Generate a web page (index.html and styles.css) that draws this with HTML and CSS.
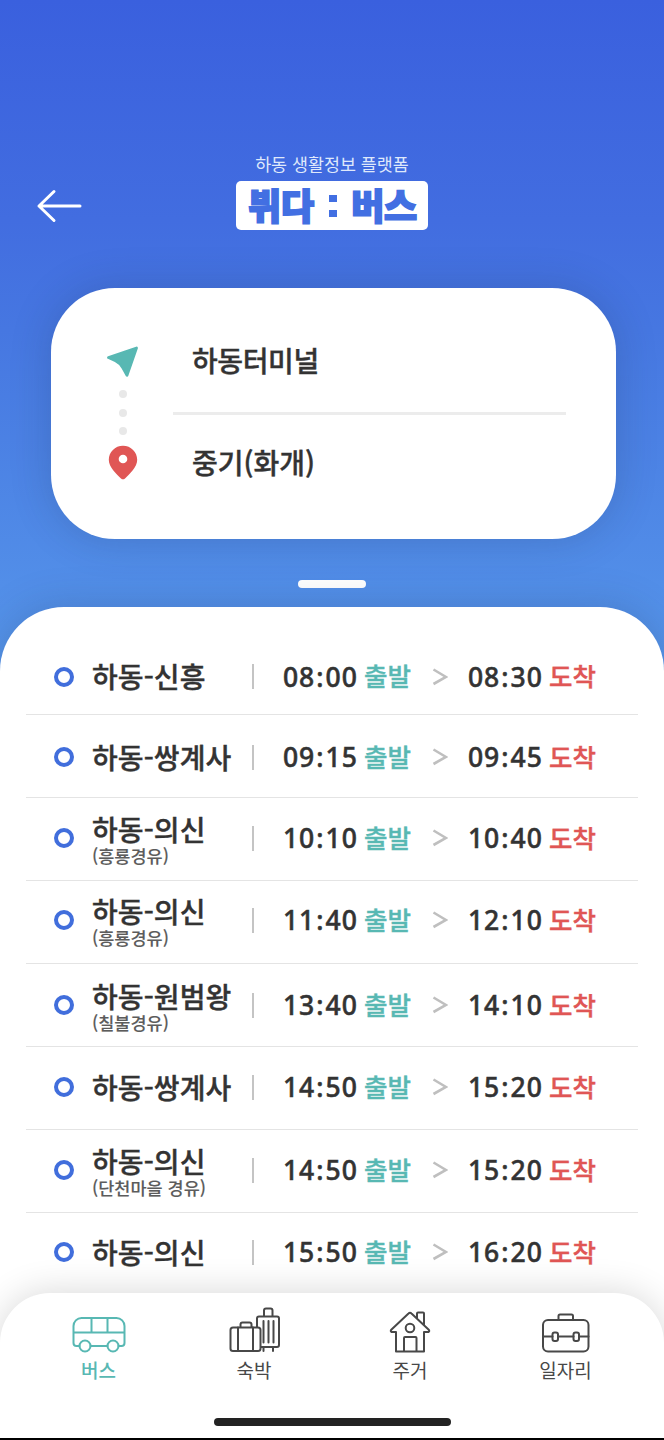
FILE: index.html
```html
<!DOCTYPE html>
<html lang="ko">
<head>
<meta charset="utf-8">
<title>뷔다 : 버스</title>
<link rel="stylesheet" href="styles.css">
</head>
<body>
<div class="screen">
  <header class="header">
    <svg class="back" width="46" height="36" viewBox="0 0 46 36"><path d="M18 3.500L3 18l15 14.500M3 18h41" fill="none" stroke="#fff" stroke-width="3" stroke-linecap="round" stroke-linejoin="round"/></svg>
    <div class="brand">
      <p class="tagline">하동 생활정보 플랫폼</p>
      <h1 class="logo"><span>뷔다</span><i class="colon"><b></b><b></b></i><span>버스</span></h1>
    </div>
  </header>

  <section class="route">
    <div class="markers">
      <svg width="32" height="32" viewBox="0 0 32 32"><path d="M1.500 11.500L29.500 2 20 29.200 16 22Q13 17 8.500 14.800Z" fill="#58b8b3" stroke="#58b8b3" stroke-width="2.800" stroke-linejoin="round"/></svg>
      <div class="dots"><i></i><i></i><i></i></div>
      <svg width="30" height="35" viewBox="0 0 30 35"><path d="M15 .7C7 .7 .8 7 .8 14.800c0 7.500 7.700 14.400 12.200 18.600q2 1.800 4 0C21.500 29.200 29.200 22.300 29.200 14.800 29.200 7 23 .7 15 .7z" fill="#e05655"/><circle cx="15" cy="14" r="4.300" fill="#fff"/></svg>
    </div>
    <div class="stops">
      <div class="stop">하동터미널</div>
      <div class="stop last">중기(화개)</div>
    </div>
  </section>

  <div class="handle"></div>

  <main class="sheet">
    <div class="row first"><i class="ring"></i><div class="name">하동-신흥</div><i class="bar"></i><time>08<b>:</b>00</time><em class="dep">출발</em><svg class="gt" viewBox="0 0 16 18"><path d="M1.500 1.500L14 9 1.500 16"/></svg><time>08<b>:</b>30</time><em class="arr">도착</em></div>
    <div class="row lowered"><i class="ring"></i><div class="name">하동-쌍계사</div><i class="bar"></i><time>09<b>:</b>15</time><em class="dep">출발</em><svg class="gt" viewBox="0 0 16 18"><path d="M1.500 1.500L14 9 1.500 16"/></svg><time>09<b>:</b>45</time><em class="arr">도착</em></div>
    <div class="row"><i class="ring"></i><div class="name via">하동-의신<small>(흥룡경유)</small></div><i class="bar"></i><time>10<b>:</b>10</time><em class="dep">출발</em><svg class="gt" viewBox="0 0 16 18"><path d="M1.500 1.500L14 9 1.500 16"/></svg><time>10<b>:</b>40</time><em class="arr">도착</em></div>
    <div class="row raised"><i class="ring"></i><div class="name via">하동-의신<small>(흥룡경유)</small></div><i class="bar"></i><time>11<b>:</b>40</time><em class="dep">출발</em><svg class="gt" viewBox="0 0 16 18"><path d="M1.500 1.500L14 9 1.500 16"/></svg><time>12<b>:</b>10</time><em class="arr">도착</em></div>
    <div class="row middle"><i class="ring"></i><div class="name via">하동-원범왕<small>(칠불경유)</small></div><i class="bar"></i><time>13<b>:</b>40</time><em class="dep">출발</em><svg class="gt" viewBox="0 0 16 18"><path d="M1.500 1.500L14 9 1.500 16"/></svg><time>14<b>:</b>10</time><em class="arr">도착</em></div>
    <div class="row"><i class="ring"></i><div class="name">하동-쌍계사</div><i class="bar"></i><time>14<b>:</b>50</time><em class="dep">출발</em><svg class="gt" viewBox="0 0 16 18"><path d="M1.500 1.500L14 9 1.500 16"/></svg><time>15<b>:</b>20</time><em class="arr">도착</em></div>
    <div class="row"><i class="ring"></i><div class="name via">하동-의신<small>(단천마을 경유)</small></div><i class="bar"></i><time>14<b>:</b>50</time><em class="dep">출발</em><svg class="gt" viewBox="0 0 16 18"><path d="M1.500 1.500L14 9 1.500 16"/></svg><time>15<b>:</b>20</time><em class="arr">도착</em></div>
    <div class="row final"><i class="ring"></i><div class="name">하동-의신</div><i class="bar"></i><time>15<b>:</b>50</time><em class="dep">출발</em><svg class="gt" viewBox="0 0 16 18"><path d="M1.500 1.500L14 9 1.500 16"/></svg><time>16<b>:</b>20</time><em class="arr">도착</em></div>
  </main>

  <nav class="tabs">
    <a class="tab active">
      <svg width="56" height="50" viewBox="0 0 56 50"><path d="M8.500 40H5.500a3 3 0 0 1-3-3V20a8 8 0 0 1 8-8h35a8 8 0 0 1 8 8v17a3 3 0 0 1-3 3h-3M19.500 40h17M2.500 26.500h51M20.500 12v14M36.500 12v14"/><circle cx="14" cy="40" r="5.500"/><circle cx="42" cy="40" r="5.500"/></svg>
      <span>버스</span>
    </a>
    <a class="tab">
      <svg width="56" height="50" viewBox="0 0 56 50"><rect x="4.500" y="21.500" width="30" height="23.500" rx="2.500"/><path d="M12 21.500V45M27 21.500V45M14.500 21v-2.500a2 2 0 0 1 2-2h7a2 2 0 0 1 2 2V21M31 21V12.500a2 2 0 0 1 2-2h18a2 2 0 0 1 2 2V39a2 2 0 0 1-2 2H35M38 10.500v-6a2 2 0 0 1 2-2h4.500a2 2 0 0 1 2 2v6M37.500 15v21.500M42.500 15v21.500M47.500 15v21.500M37.500 41v4M47 41v4"/></svg>
      <span>숙박</span>
    </a>
    <a class="tab">
      <svg width="56" height="50" viewBox="0 0 56 50"><path d="M14 45.500V26H9.500q-1.500-1 0-2.500L26.500 7.500q1.500-1.500 3 0L46.500 23.500q1.500 1.500 0 2.500H42V45.500ZM22 45.500V32a1 1 0 0 1 1-1h10.500a1 1 0 0 1 1 1V45.500M35 12.500V7.500a1 1 0 0 1 1-1h5a1 1 0 0 1 1 1V19"/><circle cx="28" cy="22" r="4.300"/></svg>
      <span>주거</span>
    </a>
    <a class="tab">
      <svg width="56" height="50" viewBox="0 0 56 50"><rect x="5" y="14" width="45.500" height="31.500" rx="5"/><path d="M20.500 13.500V10a1.500 1.500 0 0 1 1.500-1.500h11.500a1.500 1.500 0 0 1 1.500 1.500V13.500M5 30.500h9.500M20 30.500h15.500M41 30.500h9.500"/><rect x="14.500" y="26.500" width="5.500" height="8.500" rx="2"/><rect x="35.500" y="26.500" width="5.500" height="8.500" rx="2"/></svg>
      <span>일자리</span>
    </a>
    <i class="home"></i>
  </nav>
</div>
</body>
</html>
```
FILE: styles.css
```css
* { box-sizing: border-box; }
body { margin: 0; background: #000; font-family: "Noto Sans CJK KR", sans-serif; color: #333; }
p, h1 { margin: 0; }
i, em { font-style: normal; display: block; }

.screen {
  width: 664px; height: 1438px; overflow: hidden; position: relative;
  display: flex; flex-direction: column;
  background: linear-gradient(#3a60de 0, #426de0 220px, #4677e1 330px, #5594ea 650px);
}

.header { display: grid; grid-template-columns: 236px 192px; height: 288px; padding-top: 151px; flex: none; }
.back { margin: 37px 0 0 36px; }
.tagline { height: 30px; line-height: 25px; font-size: 17.400px; font-weight: 400; text-align: center; color: #dfe8fb; white-space: nowrap; }
.logo {
  display: flex; align-items: center; justify-content: space-between;
  height: 49px; padding: 0 11px 0 12px; background: #fff; border-radius: 5px;
  font-size: 36px; line-height: 46px; font-weight: 900; letter-spacing: -.2px; color: #426fe2;
  -webkit-text-stroke: 1.800px #426fe2;
}
.logo span { padding-bottom: 4px; }
.colon { display: flex; flex-direction: column; gap: 8px; }
.colon b { width: 8px; height: 7px; background: #426fe2; }

.route {
  flex: none; width: 565px; height: 251px; margin-left: 51px; padding: 58px 50px 0 55px;
  display: flex; gap: 51px; background: #fff; border-radius: 64px;
  box-shadow: 0 0 40px rgba(30, 50, 80, .22);
}
.markers { width: 34px; display: flex; flex-direction: column; align-items: center; }
.dots { display: flex; flex-direction: column; gap: 10.500px; margin: 12px 0 10px; }
.dots i { width: 8px; height: 8px; border-radius: 50%; background: #e8e8e8; }
.stops { flex: 1; margin: -2px 0 0 -18px; }
.stop { height: 71px; padding: 0 0 34px 19px; border-bottom: 3px solid #ececec; font-size: 28px; line-height: 32px; font-weight: 500; letter-spacing: -.4px; white-space: nowrap; -webkit-text-stroke: .4px #333; }
.stop.last { border: 0; padding-top: 31px; letter-spacing: 0; }

.handle { flex: none; width: 68px; height: 8px; margin: 41px 0 19px 298px; border-radius: 4px; background: #fff; }

.sheet { flex: none; height: 800px; padding: 0 26px; background: #fff; border-radius: 64px 64px 0 0; box-shadow: 0 0 40px rgba(30, 50, 80, .22); }
.row { height: 83px; display: flex; align-items: center; padding: 0 0 2px 28px; border-bottom: 1px solid #e4e4e4; }
.row.first { height: 108px; padding-top: 34px; }
.row.lowered { padding: 2px 0 0 28px; }
.row.raised { padding-bottom: 4px; }
.row.middle { padding-bottom: 0; }
.row.final { height: 80px; border: 0; }
.ring { width: 20px; height: 20px; flex: none; border: 4px solid #416edc; border-radius: 50%; }
.name { width: 178px; padding: 0 0 1px 18px; flex: none; font-size: 28px; line-height: 34px; font-weight: 500; letter-spacing: .1px; white-space: nowrap; -webkit-text-stroke: .4px #333; }
.name.via { padding: 0 0 0 18px; }
.name small { display: block; font-size: 17.500px; line-height: 19px; letter-spacing: 0; color: #5c5c5c; -webkit-text-stroke: .1px #5c5c5c; }
.bar { width: 2px; height: 25px; margin-right: 29px; background: #c4c4c4; }
time { width: 81px; font-family: "Noto Sans", sans-serif; font-size: 26.500px; line-height: 34px; font-weight: 500; letter-spacing: .900px; white-space: nowrap; -webkit-text-stroke: .5px #333; }
time b { font-weight: 500; margin: 0 1.200px; }
em { width: 47px; padding-bottom: 3px; font-size: 25.500px; line-height: 34px; font-weight: 500; white-space: nowrap; -webkit-text-stroke: .4px currentColor; }
.dep { color: #58b8b3; }
.arr { color: #e05655; }
.gt { width: 16px; height: 18px; margin: 0 20px 0 21px; fill: none; stroke: #bfbfbf; stroke-width: 2.600; }

.tabs {
  position: absolute; left: 0; top: 1293px; width: 664px; height: 145px;
  display: grid; grid-template-columns: 155px 156px 156px 155px; justify-content: center; align-content: start;
  padding: 13px 0 0; background: #fff; border-radius: 50px 50px 0 0;
  box-shadow: 0 0 36px rgba(0, 0, 0, .16);
}
.tab { display: flex; flex-direction: column; align-items: center; font-size: 19px; line-height: 28px; color: #484848; height: 103px; }
.tab svg { fill: none; stroke: currentColor; stroke-width: 2; stroke-linecap: round; stroke-linejoin: round; }
.tab.active { color: #58b8b3; font-weight: 500; }
.home { grid-column: 1 / 5; justify-self: center; width: 237px; height: 8px; margin-top: 9px; border-radius: 4px; background: #222; }
```
